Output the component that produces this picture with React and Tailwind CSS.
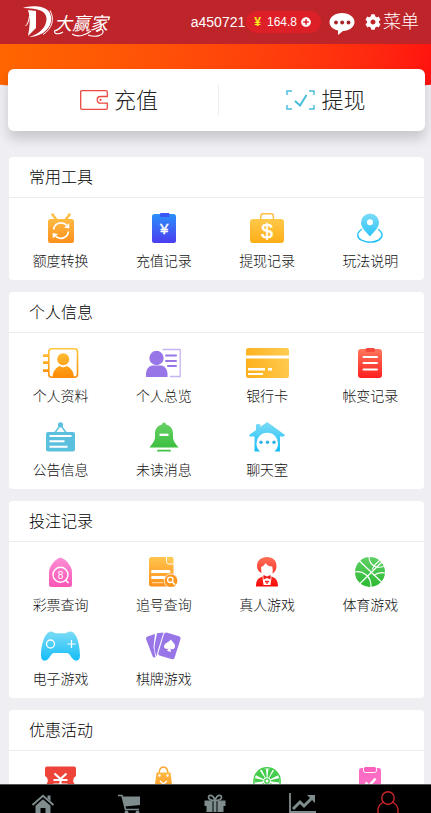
import React from 'react';
import { FaCog, FaPlusCircle } from 'react-icons/fa';

const GRADIENTS = [
  ['orange', '#ffc54d', '#fd8f1c'],
  ['amber', '#ffcf57', '#fdae16'],
  ['contact', '#fdc63c', '#fd8a05'],
  ['blue', '#2b92fb', '#4b3df0'],
  ['cyan', '#7ddcf5', '#14bdf8'],
  ['red', '#ff7a5e', '#fe1f1f'],
  ['dealer', '#ff6f57', '#f80808'],
  ['green', '#68d168', '#35bd38'],
  ['ball', '#5fd065', '#2cba31'],
  ['pink', '#fd8fd6', '#fb55b6'],
];

const GradientDefs = () => (
  <svg className="absolute w-0 h-0" aria-hidden="true">
    <defs>
      {GRADIENTS.map(([id, from, to]) => (
        <linearGradient key={id} id={id} gradientUnits="userSpaceOnUse" x1="0" y1="0" x2="0" y2="30">
          <stop offset="0" stopColor={from} />
          <stop offset="1" stopColor={to} />
        </linearGradient>
      ))}
      <linearGradient id="card" gradientUnits="userSpaceOnUse" x1="0" y1="20" x2="43" y2="8">
        <stop offset="0" stopColor="#fdb01c" />
        <stop offset="1" stopColor="#ffcb50" />
      </linearGradient>
    </defs>
  </svg>
);

const Icon = ({ w, h = 30, children }) => (
  <svg width={w} height={h} viewBox={`0 0 ${w} ${h}`} fill="none" aria-hidden="true">{children}</svg>
);

const icons = {
  transfer: (
    <Icon w={26}>
      <path d="M4.5 1.5L8.5 7M21.5 1.5L17.5 7" stroke="#ffc04a" strokeWidth="2.6" strokeLinecap="round" />
      <rect y="6" width="26" height="24" rx="2.5" fill="url(#orange)" />
      <path d="M5.6 16.5A7.6 7.6 0 0 1 18.6 12.2M20.4 18.5A7.6 7.6 0 0 1 7.6 23.2" stroke="#fff" strokeWidth="1.7" />
      <path d="M21.3 10.2V15.6L16 14.6ZM4.7 25.4V20L10 21Z" fill="#fff" />
    </Icon>
  ),
  deposit: (
    <Icon w={24}>
      <rect y="1" width="24" height="29" rx="2.5" fill="url(#blue)" />
      <rect x="8" y="0" width="9.5" height="4" rx="1" fill="#3c56f5" />
      <text x="12.2" y="20.5" textAnchor="middle" fontSize="15" fontFamily="Liberation Sans" stroke="#fff" strokeWidth=".4" fill="#fff">¥</text>
    </Icon>
  ),
  briefcase: (
    <Icon w={34}>
      <path d="M10.8 7V3.2Q10.8 .8 13.2 .8H21Q23.4 .8 23.4 3.2V7" stroke="#fdc045" strokeWidth="1.5" />
      <rect y="6" width="34" height="24" rx="3" fill="url(#amber)" />
      <text x="17" y="25" textAnchor="middle" fontSize="21" fontFamily="Liberation Sans" stroke="#fff" strokeWidth=".5" fill="#fff">$</text>
    </Icon>
  ),
  pin: (
    <Icon w={26}>
      <path d="M5 16.2C-.5 19.5-.6 24.5 4.5 27.2C9.5 29.8 17 29.8 21.8 27C26.3 24.2 26 19.5 21.2 16.2" stroke="url(#cyan)" strokeWidth="1.5" />
      <path fillRule="evenodd" d="M13 .5A9 9 0 0 1 22 9.6C22 14.5 17.5 18.5 13 23.5C8.5 18.5 4 14.5 4 9.6A9 9 0 0 1 13 .5ZM13 6.2A3 3 0 1 0 13 12.2A3 3 0 1 0 13 6.2Z" fill="url(#cyan)" />
    </Icon>
  ),
  contact: (
    <Icon w={36}>
      <rect x="5.8" y=".8" width="28.7" height="28.4" rx="3" stroke="url(#contact)" strokeWidth="1.6" />
      <path d="M0 6.2H5.5V9H0ZM0 13.2H5.5V16H0ZM0 21.2H5.5V24H0Z" fill="url(#contact)" />
      <circle cx="20.2" cy="11.2" r="6" fill="url(#contact)" />
      <path d="M9.5 29C10 22.500 13.5 19.5 16.5 18L20.2 19.5L24 18C27 19.5 30.5 22.5 31 29Z" fill="url(#contact)" />
    </Icon>
  ),
  overview: (
    <Icon w={35}>
      <path d="M16.5 1.500H34.2V28.5H24" stroke="#c6b3f3" strokeWidth="1.3" />
      <circle cx="10.5" cy="10" r="7.2" fill="#9876e8" />
      <path d="M0 29V25Q.5 19 6 17.5H15.5Q21 19 21.5 25V29Z" fill="#9876e8" />
      <path d="M20 7.5H30M20 13H30M22 18H30" stroke="#9876e8" strokeWidth="2" strokeLinecap="round" />
    </Icon>
  ),
  bankCard: (
    <Icon w={43}>
      <rect width="43" height="30" rx="2.5" fill="url(#card)" />
      <path d="M0 7.5H43V10.5H0ZM2 20H19V22.5H2ZM22 20H26V22.5H22ZM2 25H17V27H2Z" fill="#fff" />
    </Icon>
  ),
  statement: (
    <Icon w={24}>
      <rect y="1" width="24" height="29" rx="3" fill="url(#red)" />
      <rect x="7.5" y="0" width="9.5" height="4" rx="1.5" fill="#f64a3e" />
      <path d="M5.5 9H19M5.5 15H19M5.5 21.5H19" stroke="#fff" strokeWidth="1.9" strokeLinecap="round" />
    </Icon>
  ),
  notice: (
    <Icon w={29}>
      <path d="M14.5 3L9 10.5M14.5 3L20 10.5" stroke="#5bc0de" strokeWidth="1.4" />
      <circle cx="14.5" cy="2.8" r="2.6" fill="#5bc0de" />
      <rect y="10" width="29" height="19.5" rx="2" fill="#5bc0de" />
      <path d="M3.5 14H25.5M3.5 19.3H18.5M3.5 24.7H21.5" stroke="#fff" strokeWidth="1.9" />
    </Icon>
  ),
  bell: (
    <Icon w={30}>
      <path d="M13 2.5A2 2 0 0 1 17 2.5C21.5 3.5 24 7 24 11.5V15C24 19 26.5 21.5 29.5 25.5H.5C3.5 21.5 6 19 6 15V11.5C6 7 8.5 3.5 13 2.5Z" fill="url(#green)" />
      <path d="M10.5 12.8H19.5" stroke="#fff" strokeWidth="2.4" />
      <path d="M9 28.7H21" stroke="#3fc143" strokeWidth="1.8" strokeLinecap="round" />
    </Icon>
  ),
  house: (
    <Icon w={36}>
      <path d="M18.2 0L36 13L35 14.5H31V29.5H25.5A10.8 10.8 0 1 0 11 29.5H5.5V14.5H1L0 13L7 8V2.5Q8.5 1.5 11.5 2.5V4.7Z" fill="url(#cyan)" />
      <circle cx="12" cy="20.3" r="1.7" fill="#2fb4e6" />
      <circle cx="18.5" cy="20.3" r="1.7" fill="#2fb4e6" />
      <circle cx="25" cy="20.3" r="1.7" fill="#2fb4e6" />
    </Icon>
  ),
  lottery: (
    <Icon w={23}>
      <path d="M11.5 .5C16.5 1.5 23 9.5 23 15V27.5Q23 30 20.5 30H2.5Q0 30 0 27.5V15C0 9.5 6.5 1.5 11.5 .5Z" fill="url(#pink)" />
      <circle cx="11.5" cy="17.8" r="7.5" stroke="#fff" strokeWidth="1.4" />
      <path d="M16.5 23L19.5 26" stroke="#fff" strokeWidth="1.6" />
      <text x="11.5" y="21.5" textAnchor="middle" fontSize="10" fontFamily="Liberation Sans" fill="#fff">8</text>
    </Icon>
  ),
  trace: (
    <Icon w={29}>
      <path d="M2.5 0H17.5L24.5 7V29.5H2.5Q0 29.5 0 27V2.5Q0 0 2.5 0Z" fill="url(#orange)" />
      <path d="M17.5 0H22.500Q24.500 0 24.5 2V7Z" fill="#ffc54d" />
      <path d="M17.5 0V4.5Q17.5 7 20 7H24.5" stroke="#fff" strokeWidth="1" />
      <path d="M3.5 14.5H20M3.5 20.5H15" stroke="#fff" strokeWidth="3" strokeLinecap="round" />
      <path d="M3 25.7H14" stroke="#ffe1b0" strokeWidth="1" />
      <circle cx="22" cy="23.7" r="6.8" fill="#fd961f" stroke="#fff" strokeWidth=".8" />
      <circle cx="21.3" cy="22.8" r="2.7" stroke="#fff" strokeWidth="1.3" />
      <path d="M23.2 24.8L26 27.8" stroke="#fff" strokeWidth="1.5" />
    </Icon>
  ),
  dealer: (
    <Icon w={22}>
      <path d="M1 9C1 3.500 5 0 11 0C17 0 20.5 3.5 20.5 9C20.5 12.5 19 15 16.5 16.500C17 13 16.5 10.5 16.2 9.5C13.500 9.5 11 8.5 9.5 6C8.5 8.5 6.5 9.500 5 10L5.5 16C3 15 1 12.500 1 9Z" fill="url(#dealer)" />
      <path d="M0 29.5C0 23.5 2 20.5 7 19.5L11 22L15 19.500C20 20.5 22 23.5 22 29.5Z" fill="url(#dealer)" />
      <path d="M6.500 20L7.5 28H14.5L15.5 20L13 21H9Z" fill="#fff" />
      <path d="M7.5 18L11 19.5L14.5 18V22.5L11 21L7.5 22.5Z" fill="#ee1d1d" />
      <path d="M9 24.5H13M11 24.5V27" stroke="#f22" strokeWidth="1.3" />
    </Icon>
  ),
  basketball: (
    <Icon w={30}>
      <circle cx="15" cy="15" r="15" fill="url(#ball)" />
      <path d="M4 3.5L27 25.5M27 5L5 26.5M14 0C14.5 8 21 12.5 29.5 9M0 15C7.500 13.5 16.5 19 16 30M24.5 3.5C21 6 18.5 9.5 17 12.5M30 16C25 15 21.5 16.5 18.5 18.5" stroke="#fff" strokeWidth="1.2" />
    </Icon>
  ),
  gamepad: (
    <Icon w={39}>
      <path d="M10 .5C12 .5 13 2.2 15 2.2H24C26 2.2 27 .5 29.5 .5C36 .5 39 15 39 24.5C39 30.5 34.5 31 31.5 27.5C29 24.5 28.5 22 25.5 22H13.5C10.5 22 10 24.5 7.5 27.5C4.5 31 0 30.5 0 24.5C0 15 3.5 .5 10 .5Z" fill="url(#cyan)" />
      <circle cx="9.5" cy="13" r="4" stroke="#fff" strokeWidth="1.3" />
      <path d="M30.5 9V17M26.5 13H34.5" stroke="#fff" strokeWidth="1.2" />
    </Icon>
  ),
  cards: (
    <Icon w={35}>
      <path d="M1.500 5.5L9 3L7.5 16L9.5 26Q7.5 27.5 6.5 25L0 8Q-.2 6 1.5 5.5Z" fill="#9876e8" />
      <path d="M11 2.3L17.5 1.5L12 19L10.5 25.5Q8 20 8.5 15Z" fill="#9876e8" />
      <path d="M20.5 1.5L33 5.2Q35 6 34.5 8L28.5 27Q27.8 28.6 26 28.2L13.5 24.5Q11.8 23.8 12.3 22L18 3Q18.8 1.2 20.5 1.5Z" fill="#9876e8" />
      <path d="M25 8.5C26.5 11.5 29.7 13 29 16C28.4 18.2 26 18.7 24.3 17.7L25 21L21 19.8L22.8 17.2C21.5 18.5 18.5 18 18 15.8C17.6 12.5 22.5 11.5 25 8.5Z" fill="#fff" />
    </Icon>
  ),
  coupon: (
    <Icon w={31}>
      <path d="M2 .5H29Q31 .5 31 2.5V10A5 5 0 0 0 31 19V30H0V19A5 5 0 0 0 0 10V2.5Q0 .5 2 .5Z" fill="#ee4338" />
      <path d="M9.5 7.5L15.5 13L21.5 7.5M8.5 14H22.5M8.5 18.5H22.5M15.5 13V25" stroke="#fff" strokeWidth="2.2" />
    </Icon>
  ),
  bag: (
    <Icon w={19}>
      <path d="M5 9C5 4 6 1 9.5 1C13 1 14 4 14 9" stroke="#fba62c" strokeWidth="1.4" />
      <path d="M2.5 6.5H16.5L19 27Q19 30 16.5 30H2.500Q0 30 0 27Z" fill="url(#orange)" />
      <circle cx="5.5" cy="9.500" r="1.2" fill="#fff" />
      <circle cx="13.5" cy="9.5" r="1.2" fill="#fff" />
      <path d="M6 15L9.5 18L13 15M9.5 18V25" stroke="#fff" strokeWidth="1.5" />
    </Icon>
  ),
  wheel: (
    <Icon w={28}>
      <circle cx="14" cy="15" r="13.2" stroke="#44cc4c" strokeWidth="1.4" />
      <path d="M14 15L13 3H8.5ZM14 15L20 3H15.500ZM14 15L6.500 4L2.500 9ZM14 15L21.500 4L25.500 9ZM14 15L1.500 12V16.5ZM14 15L26.5 12V16.5ZM14 15L4 21L7 25ZM14 15L24 21L21 25ZM14 15L11 27H17Z" fill="#44cc4c" />
      <circle cx="14" cy="15" r="3.8" fill="#fff" />
      <circle cx="14" cy="15" r="2.2" stroke="#44cc4c" strokeWidth="1.3" />
    </Icon>
  ),
  task: (
    <Icon w={22}>
      <rect y="2" width="22" height="28" rx="2.5" fill="#fd6cc4" />
      <rect x="4.5" y=".5" width="13" height="6" rx="2" fill="#fc62bd" stroke="#fff" strokeWidth="1" />
      <path d="M6.5 16.5L10 20L16.5 12.500" stroke="#fff" strokeWidth="2.6" />
    </Icon>
  ),
};

const sections = [
  {
    title: '常用工具',
    items: [
      { icon: 'transfer', label: '额度转换' },
      { icon: 'deposit', label: '充值记录' },
      { icon: 'briefcase', label: '提现记录' },
      { icon: 'pin', label: '玩法说明' },
    ],
  },
  {
    title: '个人信息',
    items: [
      { icon: 'contact', label: '个人资料' },
      { icon: 'overview', label: '个人总览' },
      { icon: 'bankCard', label: '银行卡' },
      { icon: 'statement', label: '帐变记录' },
      { icon: 'notice', label: '公告信息' },
      { icon: 'bell', label: '未读消息' },
      { icon: 'house', label: '聊天室' },
    ],
  },
  {
    title: '投注记录',
    items: [
      { icon: 'lottery', label: '彩票查询' },
      { icon: 'trace', label: '追号查询' },
      { icon: 'dealer', label: '真人游戏' },
      { icon: 'basketball', label: '体育游戏' },
      { icon: 'gamepad', label: '电子游戏' },
      { icon: 'cards', label: '棋牌游戏' },
    ],
  },
  {
    title: '优惠活动',
    items: [{ icon: 'coupon' }, { icon: 'bag' }, { icon: 'wheel' }, { icon: 'task' }],
  },
];

const navIcons = [
  {
    id: 'home',
    icon: (
      <Icon w={24} h={20}>
        <path d="M1.5 12L12 2.8L22.5 12" stroke="#7f8c8d" strokeWidth="2" />
        <path d="M16.5 2.5H19.5V8L16.5 5.5ZM12 6.2L19.5 12.7V22H14.5V15H9.5V22H4.5V12.7Z" fill="#7f8c8d" />
      </Icon>
    ),
  },
  {
    id: 'shop',
    icon: (
      <Icon w={24} h={20}>
        <path d="M1 2.500H5L8.5 16.5H22" stroke="#7f8c8d" strokeWidth="1.6" />
        <path d="M5.5 3.5H23V12L8 13.5Z" fill="#7f8c8d" />
        <circle cx="9.5" cy="19.500" r="2" fill="#7f8c8d" />
        <circle cx="20.5" cy="19.5" r="2" fill="#7f8c8d" />
      </Icon>
    ),
  },
  {
    id: 'gift',
    icon: (
      <Icon w={22} h={20}>
        <path d="M11 7.5C8 7.5 4.5 7 4.5 4.3C4.5 1.5 9 1 11 7.5C13 1 17.5 1.5 17.5 4.3C17.5 7 14 7.5 11 7.5Z" stroke="#7f8c8d" strokeWidth="1.7" />
        <path d="M.5 7.5H8.5V13H.5ZM13.5 7.5H21.5V13H13.5ZM2.5 13H8.5V19H2.5ZM13.5 13H19.5V19H13.5ZM9.5 8H12.5V19H9.5Z" fill="#7f8c8d" />
      </Icon>
    ),
  },
  {
    id: 'trend',
    icon: (
      <Icon w={28} h={21}>
        <path d="M2 1V20H28" stroke="#7f8c8d" strokeWidth="1.8" />
        <path d="M5 17L12 10L16 14L24 6" stroke="#7f8c8d" strokeWidth="3" />
        <path d="M19 3H27V11Z" fill="#7f8c8d" />
      </Icon>
    ),
  },
  {
    id: 'me',
    icon: (
      <Icon w={22} h={22}>
        <circle cx="11" cy="7" r="6.2" stroke="#c9252b" strokeWidth="1.4" />
        <path d="M6.5 11C3 13 1 15.5 1 19V22M15.5 11C19 13 21 15.5 21 19V22" stroke="#c9252b" strokeWidth="1.4" />
      </Icon>
    ),
  },
];

const Logo = () => (
  <a href="#top" className="flex items-center text-white">
    <svg width="31" height="32" viewBox="0 0 31 32" fill="none" aria-hidden="true">
      <path d="M0 2C6-.5 20-1 25.5 5C31 12 28 23 18 28C14 30 10 31 6 31C16 28 23 22 23.5 13.5C24 5.500 16 2 0 2Z" fill="#fff" />
      <path d="M5 4L13 5V22L5 30C7 20 7.500 12 5 4Z" fill="#fff" />
      <path d="M27 4.5C32 13 29 23 20 28.5" stroke="#fff" strokeWidth="1" />
      <path d="M6.5 10C5.5 15 5 18 2.5 20" stroke="#fff" strokeWidth="1" />
    </svg>
    <span className="relative font-['Noto_Sans_CJK_SC',sans-serif] text-lg leading-6 italic">
      大赢家
      <svg className="absolute left-0 top-4 w-full" height="11" viewBox="0 0 54 11" fill="none" aria-hidden="true">
        <path d="M1 4C-1 8 4 9 9 6M18 8C24 12 32 9 37 5M34 9C42 12 50 9 49 5C48 2 43 3 43 6" stroke="#fff" strokeWidth="1.1" />
      </svg>
    </span>
  </a>
);

const Header = () => (
  <header className="flex items-center h-11 shrink-0 pl-[23px] pr-3 bg-[#be252b] text-white">
    <Logo />
    <span className="ml-auto text-sm">a450721</span>
    <button type="button" className="flex items-center h-[22px] ml-px pl-2 pr-2.5 rounded-full bg-[#dd2027] text-xs">
      <span className="mr-1.5 font-bold text-[#ffec1f]">¥</span>
      164.8
      <FaPlusCircle className="ml-1" size={10} />
    </button>
    <a href="#chat" className="ml-2 pt-1">
      <svg width="26" height="22" viewBox="0 0 26 22" fill="none" aria-hidden="true">
        <path d="M13 0C20 0 25.5 4 25.5 9C25.5 14 20 18 14 18L9 22V17.5C4 16.5 .5 13 .5 9C.5 4 6 0 13 0Z" fill="#fff" />
        <circle cx="7" cy="9.5" r="1.9" fill="#a8232a" />
        <circle cx="13.2" cy="9.5" r="1.9" fill="#a8232a" />
        <circle cx="19.5" cy="9.5" r="1.9" fill="#a8232a" />
      </svg>
    </a>
    <button type="button" className="flex items-center gap-0.5 ml-2.5 text-lg font-light">
      <FaCog size={16} />
      菜单
    </button>
  </header>
);

const QuickActions = () => (
  <div className="relative flex items-center ml-2 mr-1.5 -mt-[22px] h-[62px] rounded-md bg-white shadow-[0_8px_12px_rgba(0,0,0,0.16)] text-[22px] font-light text-[#222]">
    <a href="#recharge" className="flex flex-1 items-center justify-center gap-1.5 h-[30px] pl-3 border-r border-[#eee]">
      <svg width="28" height="20" viewBox="0 0 28 20" fill="none" aria-hidden="true">
        <path d="M27.3 6.5V2Q27.3 .7 26 .7H2Q.7 .7 .7 2V18Q.7 19.3 2 19.3H26Q27.3 19.3 27.3 18V13.2H20.5A3.3 3.3 0 0 1 20.5 6.5Z" stroke="#ea4a40" strokeWidth="1.3" />
        <circle cx="20.5" cy="9.9" r="1.1" fill="#ea4a40" />
      </svg>
      充值
    </a>
    <a href="#withdraw" className="flex flex-1 items-center justify-center gap-1.5 h-[30px] pl-2">
      <svg width="29" height="20" viewBox="0 0 29 20" fill="none" aria-hidden="true">
        <path d="M6 1H1V5M23 1H28V5M1 15V19H6M28 15V19H23" stroke="#45bddb" strokeWidth="1.4" />
        <path d="M9 11L14 15.5L20.5 5" stroke="#45bddb" strokeWidth="2" />
      </svg>
      提现
    </a>
  </div>
);

const Section = ({ title, items }) => (
  <section className="rounded bg-white">
    <h2 className="h-[41px] px-5 border-b border-[#ececec] text-base leading-[42px] font-light text-black">{title}</h2>
    <div className="grid grid-cols-4 gap-y-4 pt-[15px] pr-0.5 pb-[9px]">
      {items.map(item => (
        <a key={item.icon} href={`#${item.icon}`} className="flex flex-col items-center">
          <span className="flex items-center justify-center h-[30px]">{icons[item.icon]}</span>
          {item.label && <span className="mt-2 text-sm leading-5 font-light text-[#111]">{item.label}</span>}
        </a>
      ))}
    </div>
  </section>
);

const App = () => (
  <div className="flex flex-col h-screen bg-[#efeef3] font-['Liberation_Sans','Noto_Sans_CJK_SC',sans-serif]">
    <GradientDefs />
    <Header />
    <main className="flex-1 min-h-0 overflow-y-auto [scrollbar-width:none]">
      <div className="h-[47px] bg-linear-100 from-[#ff6600] to-[#ff1010] [clip-path:ellipse(100%_100%_at_50%_0)]" />
      <QuickActions />
      <div className="flex flex-col gap-3 mt-[26px] pl-[9px] pr-[7px]">
        {sections.map(section => <Section key={section.title} {...section} />)}
      </div>
    </main>
    <nav className="grid grid-cols-5 items-end shrink-0 pt-1.5 border-t border-[#555] bg-black">
      {navIcons.map(item => (
        <a key={item.id} href={`#${item.id}`} className="flex justify-center">{item.icon}</a>
      ))}
    </nav>
  </div>
);

export default App;
